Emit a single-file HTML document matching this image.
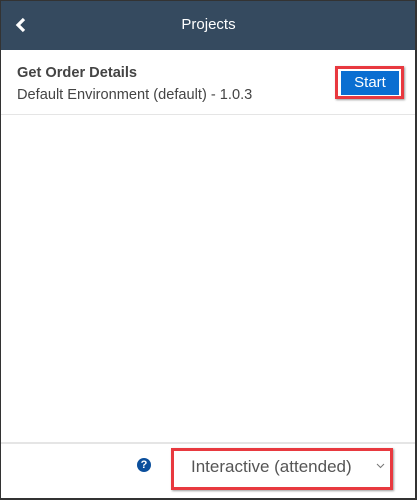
<!DOCTYPE html><html><head><style>
body{margin:0;width:417px;height:500px;overflow:hidden;font-family:"Liberation Sans",Arial,sans-serif;background:#fff}
.f{position:absolute;left:0;top:0;width:414px;height:497px;border:1px solid #333;border-right-width:2px;border-bottom-width:2px;box-sizing:content-box}
.abs{position:absolute}
</style></head><body>
<div class="f"></div>
<div class="abs" style="left:1px;top:1px;width:414px;height:49px;background:#354a5f"></div>
<svg class="abs" style="left:15px;top:17px" width="12" height="16" viewBox="0 0 12 16"><path d="M9 2L3 8l6 6" stroke="#fff" stroke-width="3.2" fill="none"/></svg>
<div class="abs" style="left:0;width:417px;top:16px;text-align:center;color:#fff;font-size:15px">Projects</div>
<div class="abs" style="left:17px;top:65px;font-size:14.6px;font-weight:bold;color:#444">Get Order Details</div>
<div class="abs" style="left:17px;top:87px;font-size:14.6px;color:#444">Default Environment (default) - 1.0.3</div>
<div class="abs" style="left:335px;top:66px;width:63px;height:27px;border:3px solid #e8393f;box-shadow:1px 1px 2px rgba(0,0,0,.4)"></div>
<div class="abs" style="left:341px;top:71px;width:58px;height:24px;background:#0a6ed1;color:#fff;font-size:15px;text-align:center;line-height:24px">Start</div>
<div class="abs" style="left:1px;top:114px;width:414px;height:1px;background:#e5e5e5"></div>
<div class="abs" style="left:1px;top:442px;width:414px;height:2px;background:#e5e5e5"></div>
<div class="abs" style="left:137px;top:458px;width:14px;height:14px;border-radius:50%;background:#0b4f9c;color:#fff;font-size:11px;font-weight:bold;text-align:center;line-height:14px">?</div>
<div class="abs" style="left:171px;top:448px;width:216px;height:36px;border:3px solid #e8393f;box-shadow:1px 1px 2px rgba(0,0,0,.4)"></div>
<div class="abs" style="left:191px;top:457px;font-size:17px;color:#555">Interactive (attended)</div>
<svg class="abs" style="left:376px;top:463px" width="9" height="6" viewBox="0 0 9 6"><path d="M1 1l3.5 3.5L8 1" stroke="#777" fill="none"/></svg>
</body></html>
